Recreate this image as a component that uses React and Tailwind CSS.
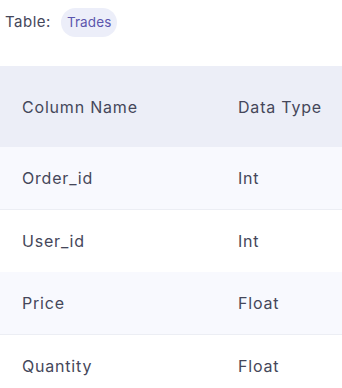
import React from "react";

const rows = [
  { name: "Order_id", type: "Int" },
  { name: "User_id", type: "Int" },
  { name: "Price", type: "Float" },
  { name: "Quantity", type: "Float" },
];

const App = () => {
  return (
    <div className="w-[342px] h-[388px] overflow-hidden bg-white font-['Inter',sans-serif] text-[#45475a]">
      <div className="flex items-center h-[44px] pl-[5px] gap-[10px]">
        <span className="text-[15px] tracking-[0.5px]">Table:</span>
        <span className="rounded-full bg-[#eceef9] px-[6px] h-[29px] flex items-center text-[13.5px] tracking-[0.1px] text-[#5c56ad]">
          Trades
        </span>
      </div>

      <div className="mt-[22px]">
        <div className="flex items-center h-[81px] bg-[#eceef7] text-[16px] tracking-[0.8px]">
          <div className="w-[238px] pl-[22px]">Column Name</div>
          <div>Data Type</div>
        </div>
        {rows.map((row, i) => (
          <div
            key={row.name}
            className={
              i % 2 === 0
                ? "flex items-center h-[63px] bg-[#f8f9fe] border-b border-[#eceef4] text-[16px] tracking-[0.8px]"
                : "flex items-center h-[62px] bg-white text-[16px] tracking-[0.8px]"
            }
          >
            <div className="w-[238px] pl-[22px]">{row.name}</div>
            <div>{row.type}</div>
          </div>
        ))}
      </div>
    </div>
  );
};

export default App;
